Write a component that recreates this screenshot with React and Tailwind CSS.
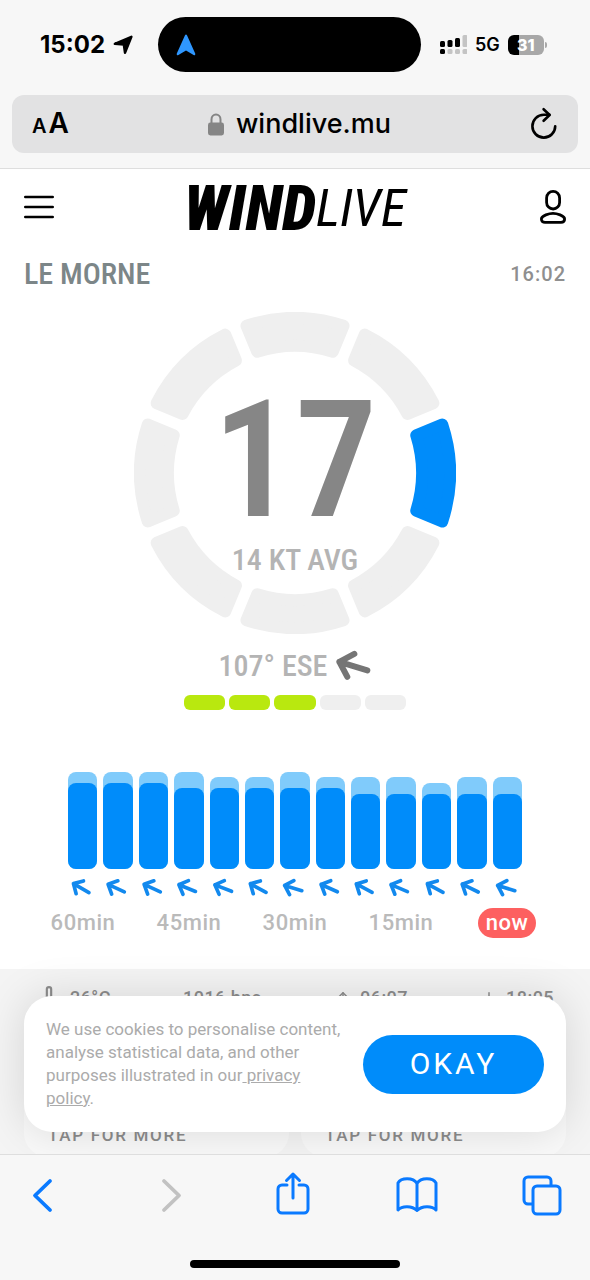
import { Thermometer, ArrowUp, ArrowDown } from "lucide-react";

const DIRECTIONS = 8;

const history = [
  { gust: 18, avg: 16, angle: 30 },
  { gust: 18, avg: 16, angle: 25 },
  { gust: 18, avg: 16, angle: 25 },
  { gust: 18, avg: 15, angle: 22 },
  { gust: 17, avg: 15, angle: 21 },
  { gust: 17, avg: 15, angle: 29 },
  { gust: 18, avg: 15, angle: 17 },
  { gust: 17, avg: 15, angle: 24 },
  { gust: 17, avg: 14, angle: 28 },
  { gust: 17, avg: 14, angle: 23 },
  { gust: 16, avg: 14, angle: 29 },
  { gust: 17, avg: 14, angle: 26 },
  { gust: 17, avg: 14, angle: 17 },
];

const labels = ["60min", "45min", "30min", "15min", "now"];

// one rounded block of the wind rose, drawn around 0,0 and facing east
function segmentPath() {
  const outer = 155;
  const inner = 127;
  const half = Math.PI / DIRECTIONS;
  const a = half - Math.asin(11.5 / outer);
  const b = half - Math.asin(11.5 / inner);
  const p = (r, t) => `${r * Math.cos(t)} ${r * Math.sin(t)}`;
  return `M${p(outer, -a)} A${outer} ${outer} 0 0 1 ${p(outer, a)} L${p(inner, b)} A${inner} ${inner} 0 0 0 ${p(inner, -b)} Z`;
}

function WindArrow({ angle, className }) {
  return (
    <svg viewBox="-12 -12 24 24" className={className} aria-hidden="true">
      <g
        transform={`rotate(${angle})`}
        fill="none"
        stroke="currentColor"
        strokeWidth="4"
        strokeLinecap="round"
        strokeLinejoin="round"
      >
        <path d="M10 0H-9.5M-1.5 -8L-9.5 0L-1.5 8" />
      </g>
    </svg>
  );
}

function StatusBar() {
  return (
    <div className="h-[95px] px-3 grid grid-cols-[146px_1fr_157px] items-start pt-[17px]">
      <div className="h-[55px] flex items-center gap-2 pl-7 font-bold text-2xl">
        15:02
        <svg
          viewBox="0 0 20 20"
          className="w-5 h-5"
          stroke="#000"
          strokeWidth="2.4"
          strokeLinejoin="round"
          aria-hidden="true"
        >
          <path d="M18.4 1.8L12 17.8L10.8 9.6L1.8 8.8Z" />
        </svg>
      </div>
      <div className="h-[55px] rounded-full bg-black flex items-center pl-[18px]">
        <svg viewBox="0 0 20 22" className="w-5 h-[22px]" aria-hidden="true">
          <path
            d="M8.9 1.4Q10 -.4 11.1 1.4L19.2 19.6Q19.6 21.8 17.6 21L10 16.4L2.4 21Q.4 21.8 .8 19.6Z"
            fill="#2f97ff"
          />
        </svg>
      </div>
      <div className="h-[55px] flex items-center gap-2 pl-[19px] font-semibold text-lg">
        <svg viewBox="0 0 27 20" className="w-[27px] h-5" aria-hidden="true">
          <rect x="0" y="6" width="5" height="6" rx="1.5" />
          <rect x="7.5" y="5" width="5" height="7" rx="1.5" />
          <rect x="15" y="3" width="5" height="9" rx="1.5" />
          <rect x="22.5" y="0" width="5" height="12" rx="1.5" fill="#c4c4c4" />
          <rect x="0" y="14" width="5" height="5" rx="1.5" />
          <rect x="7.5" y="14" width="5" height="5" rx="1.5" fill="#c4c4c4" />
          <rect x="15" y="14" width="5" height="5" rx="1.5" fill="#c4c4c4" />
          <rect x="22.5" y="14" width="5" height="5" rx="1.5" fill="#c4c4c4" />
        </svg>
        5G
        <div className="flex items-center gap-px">
          <div className="w-9 h-5 rounded-md bg-[linear-gradient(90deg,#000_31%,#a8a8a8_31%)] text-white text-base leading-5 font-extrabold text-center">
            31
          </div>
          <div className="w-0.5 h-1.5 rounded-r-full bg-[#a8a8a8]" />
        </div>
      </div>
    </div>
  );
}

function AddressBar() {
  return (
    <div className="mx-3 mb-[15px] h-[58px] rounded-xl bg-[#e2e2e3] flex items-center justify-between px-5">
      <button className="flex items-baseline gap-0.5 font-semibold leading-none" aria-label="Page settings">
        <span className="text-xl">A</span>
        <span className="text-[28px]">A</span>
      </button>
      <div className="flex items-center gap-3 text-[27px] font-medium">
        <svg viewBox="0 0 16 23" className="w-4 h-[23px]" fill="#858585" aria-hidden="true">
          <rect x="0" y="9.5" width="16" height="13" rx="2.4" />
          <path d="M3.5 11V6.4a4.5 4.8 0 0 1 9 0V11" fill="none" stroke="#858585" strokeWidth="2" />
        </svg>
        windlive.mu
      </div>
      <button aria-label="Reload" className="w-7">
        <svg
          viewBox="0 0 28 34"
          className="w-7 h-[34px]"
          fill="none"
          stroke="#000"
          strokeWidth="2.6"
          strokeLinecap="round"
          strokeLinejoin="round"
        >
          <path d="M25.2 19.2A11.4 11.4 0 1 1 13.8 7.8H19.5" />
          <path d="M13.6 2.2L19.6 8L13.6 13.8" />
        </svg>
      </button>
    </div>
  );
}

function Header() {
  return (
    <header className="h-[76px] px-6 grid grid-cols-[60px_1fr_60px] items-center">
      <button aria-label="Menu" className="w-[30px]">
        <svg viewBox="0 0 30 24" className="w-[30px] h-6" stroke="#000" strokeWidth="2.6" strokeLinecap="round">
          <path d="M1.3 2H28.7M1.3 12H28.7M1.3 22H28.7" />
        </svg>
      </button>
      <h1 className="pt-1 flex items-center justify-center italic leading-none font-['Roboto_Condensed','Liberation_Sans_Narrow',sans-serif]">
        <span className="font-black text-[62px]">WIND</span>
        <span className="text-[52px]">LIVE</span>
      </h1>
      <button aria-label="Account" className="w-[26px] justify-self-end">
        <svg viewBox="0 0 26 34" className="w-[26px] h-[34px]" fill="none" stroke="#000" strokeWidth="2.8">
          <rect x="6.6" y="1.4" width="13" height="17.6" rx="6.5" />
          <path d="M13 23.4C16.5 23.4 24.6 25.6 24.6 29C24.6 31.4 23 32.4 21 32.4H5C3 32.4 1.4 31.4 1.4 29C1.4 25.6 9.5 23.4 13 23.4Z" />
        </svg>
      </button>
    </header>
  );
}

function WindRose() {
  const d = segmentPath();
  return (
    <div className="relative w-[322px] h-[322px] mx-auto mt-[9px]">
      <svg viewBox="-161 -161 322 322" className="w-full h-full" aria-hidden="true">
        {Array.from({ length: DIRECTIONS }, (_, i) => {
          const color = i === 0 ? "#008cfa" : "#efefef";
          return (
            <path
              key={i}
              d={d}
              transform={`rotate(${i * 45})`}
              fill={color}
              stroke={color}
              strokeWidth="12"
              strokeLinejoin="round"
            />
          );
        })}
      </svg>
      <div className="absolute inset-0 flex flex-col items-center pt-16 font-['Roboto_Condensed','Liberation_Sans_Narrow',sans-serif]">
        <p className="text-[164px] leading-[168px] font-semibold text-[#868686]">17</p>
        <p className="text-3xl leading-8 font-medium text-[#b4b4b4]">14 KT AVG</p>
      </div>
    </div>
  );
}

function History() {
  return (
    <section>
      <div className="px-[68px] grid grid-cols-13 gap-1.5 items-end h-[97px]">
        {history.map((h, i) => (
          <div
            key={i}
            className="rounded-lg bg-[#80cbfb] flex items-end"
            style={{ height: Math.round(h.gust * 5.4) }}
          >
            <div className="w-full rounded-lg bg-[#008cfa]" style={{ height: Math.floor(h.avg * 5.4) }} />
          </div>
        ))}
      </div>
      <div className="px-[68px] grid grid-cols-13 gap-1.5 mt-2 text-[#1289ee]">
        {history.map((h, i) => (
          <WindArrow key={i} angle={h.angle} className="w-[22px] h-[22px] ml-0.5" />
        ))}
      </div>
      <div className="px-[30px] mt-[9px] grid grid-cols-5 justify-items-center text-[22px] leading-[30px] tracking-wide font-medium font-['Roboto',sans-serif]">
        {labels.map((label) =>
          label === "now" ? (
            <span key={label} className="rounded-full bg-[#fd6060] px-2 text-white">
              {label}
            </span>
          ) : (
            <span key={label} className="text-[#bababa]">
              {label}
            </span>
          )
        )}
      </div>
    </section>
  );
}

function Conditions() {
  return (
    <section className="mt-[31px] h-[200px] bg-[#f4f4f4] px-6 pt-4 text-[#8c8c8c] font-medium font-['Roboto',sans-serif]">
      <div className="flex items-center justify-between px-3 text-lg leading-6 tracking-wide">
        <span className="flex items-center gap-2">
          <Thermometer size={26} />
          26°C
        </span>
        <span>1016 hpa</span>
        <span className="flex items-center gap-2">
          <ArrowUp size={18} />
          06:07
        </span>
        <span className="flex items-center gap-2">
          <ArrowDown size={18} />
          18:05
        </span>
      </div>
      <div className="grid grid-cols-2 gap-3 mt-5">
        {["Spot", "Forecast"].map((card) => (
          <button
            key={card}
            className="h-[126px] rounded-3xl bg-[#f9f9f9] px-6 pb-3 flex items-end text-[17px] leading-5 tracking-widest"
          >
            TAP FOR MORE
          </button>
        ))}
      </div>
    </section>
  );
}

function CookieBanner() {
  return (
    <div className="absolute inset-x-6 bottom-[22px] rounded-[28px] bg-white shadow-[0_0_44px_rgba(0,0,0,0.13)] flex items-center justify-between p-[22px] gap-5">
      <p className="text-[17px] leading-[23px] text-[#ababab] font-['Roboto',sans-serif]">
        We use cookies to personalise content, analyse statistical data, and other purposes illustrated in our
        <a href="#privacy" className="underline">
          {" "}
          privacy policy
        </a>
        .
      </p>
      <button className="shrink-0 w-[181px] h-[59px] rounded-full bg-[#008cfa] text-white text-3xl tracking-widest font-['Roboto',sans-serif]">
        OKAY
      </button>
    </div>
  );
}

function Toolbar() {
  return (
    <nav className="h-[126px] shrink-0 border-t border-[#dedede] bg-[#f7f7f7] flex flex-col items-center justify-between pb-3 pt-3">
      <div className="w-full pl-[22px] pr-[27px] flex items-center justify-between text-[#0a7aff]">
        <button aria-label="Back" className="w-[42px] flex justify-center">
          <svg viewBox="0 0 28 56" className="w-7 h-14" fill="none" stroke="currentColor" strokeWidth="3.8" strokeLinecap="round" strokeLinejoin="round">
            <path d="M21 14L6 28.5L21 43" />
          </svg>
        </button>
        <button aria-label="Forward" disabled className="w-[42px] flex justify-center text-[#c2c2c2]">
          <svg viewBox="0 0 28 56" className="w-7 h-14" fill="none" stroke="currentColor" strokeWidth="3.8" strokeLinecap="round" strokeLinejoin="round">
            <path d="M10 14L25 28.5L10 43" />
          </svg>
        </button>
        <button aria-label="Share" className="w-[42px] flex justify-center">
          <svg viewBox="0 0 34 56" className="w-[34px] h-14" fill="none" stroke="currentColor" strokeWidth="3" strokeLinecap="round" strokeLinejoin="round">
            <path d="M11 18H6a4 4 0 0 0-4 4V42a4 4 0 0 0 4 4H28a4 4 0 0 0 4-4V22a4 4 0 0 0-4-4H23" />
            <path d="M17 31V7M10.5 13.5L17 7L23.5 13.5" />
          </svg>
        </button>
        <button aria-label="Bookmarks" className="w-[42px] flex justify-center">
          <svg viewBox="0 0 42 56" className="w-[42px] h-14" fill="none" stroke="currentColor" strokeWidth="3" strokeLinecap="round" strokeLinejoin="round">
            <path d="M2 43V16C5 10.5 17 10 21 16.5C25 10 37 10.5 40 16V43C36 38.5 26 38.5 21 43.5C16 38.5 6 38.5 2 43ZM21 16.5V43" />
          </svg>
        </button>
        <button aria-label="Tabs" className="w-[42px] flex justify-center">
          <svg viewBox="0 0 40 56" className="w-10 h-14" fill="none" stroke="currentColor" strokeWidth="3" strokeLinejoin="round">
            <rect x="11" y="19" width="27" height="28" rx="4" />
            <path d="M11 37H6a4 4 0 0 1-4-4V14a4 4 0 0 1 4-4H25a4 4 0 0 1 4 4V19" />
          </svg>
        </button>
      </div>
      <div className="w-[210px] h-2 rounded-full bg-black" />
    </nav>
  );
}

export default function App() {
  return (
    <div className="h-screen flex flex-col bg-white text-black font-['Inter',sans-serif]">
      <div className="shrink-0 bg-[#f7f7f7] border-b border-[#dedede]">
        <StatusBar />
        <AddressBar />
      </div>

      <main className="relative flex-1 min-h-0 overflow-hidden">
        <Header />
        <div className="px-6 h-[58px] flex items-center justify-between">
          <h2 className="text-3xl font-medium text-[#7c8688] font-['Roboto_Condensed','Liberation_Sans_Narrow',sans-serif]">
            LE MORNE
          </h2>
          <time className="text-xl tracking-wider font-medium text-[#8f8f8f] font-['Roboto',sans-serif]">16:02</time>
        </div>
        <WindRose />
        <div className="mt-[14px] h-9 flex items-center justify-center gap-2">
          <p className="text-3xl leading-8 font-medium text-[#b4b4b4] font-['Roboto_Condensed','Liberation_Sans_Narrow',sans-serif]">
            107° ESE
          </p>
          <WindArrow angle={17} className="w-9 h-9 text-[#757575]" />
        </div>
        <div className="mx-auto mt-[11px] mb-[62px] w-[222px] grid grid-cols-5 gap-1">
          {[1, 2, 3, 4, 5].map((n) => (
            <div
              key={n}
              className={n <= 3 ? "h-[15px] rounded-md bg-[#b9e80f]" : "h-[15px] rounded-md bg-[#efefef]"}
            />
          ))}
        </div>
        <History />
        <Conditions />
        <CookieBanner />
      </main>

      <Toolbar />
    </div>
  );
}
